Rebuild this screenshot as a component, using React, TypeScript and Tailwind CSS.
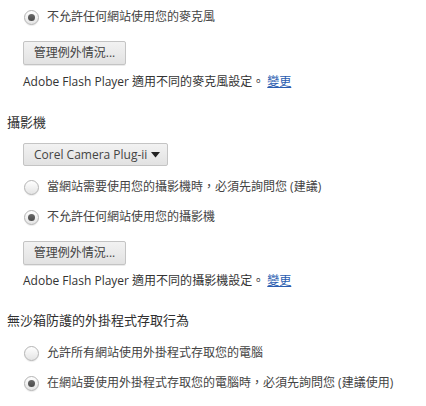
import React from 'react';

const font = { fontFamily: '"Open Sans", "Noto Sans CJK TC", sans-serif' };

const Radio: React.FC<{ checked?: boolean; label: string }> = ({ checked, label }) => (
  <label className="flex items-center h-[30px] pl-[24px] gap-[8px] text-[12px] text-[#444]">
    <span className="w-[15px] h-[15px] rounded-full border border-[#b4b4b4] bg-gradient-to-b from-[#ffffff] to-[#e4e4e4] shadow-[0_1px_1px_rgba(0,0,0,0.08)] flex items-center justify-center shrink-0">
      {checked && <span className="w-[7px] h-[7px] rounded-full bg-gradient-to-b from-[#6a6a6a] to-[#4a4a4a]" />}
    </span>
    <span className="whitespace-nowrap">{label}</span>
  </label>
);

const Button: React.FC<{ label: string }> = ({ label }) => (
  <div className="ml-[23px] w-[103px] h-[24px] flex items-center justify-center rounded-[2px] border border-[#c4c4c4] bg-gradient-to-b from-[#f2f2f2] to-[#e2e2e2] shadow-[0_1px_0_rgba(0,0,0,0.08)] text-[12px] text-[#444] whitespace-nowrap">
    {label}
  </div>
);

const Note: React.FC<{ what: string }> = ({ what }) => (
  <p className="ml-[23px] h-[18px] leading-[18px] text-[12px] text-[#333] whitespace-nowrap">
    Adobe Flash Player 適用不同的{what}設定。{' '}
    <a className="text-[#2a5db0] underline">變更</a>
  </p>
);

const Heading: React.FC<{ text: string }> = ({ text }) => (
  <h2 className="ml-[7px] h-[18px] leading-[18px] text-[13px] text-[#303030] whitespace-nowrap">{text}</h2>
);

export default function App() {
  return (
    <div className="w-[426px] h-[406px] bg-white overflow-hidden flex flex-col pt-[2px]" style={font}>
      <Radio checked label="不允許任何網站使用您的麥克風" />
      <div className="mt-[9px]"><Button label="管理例外情況..." /></div>
      <div className="mt-[8px]"><Note what="麥克風" /></div>
      <div className="mt-[22px]"><Heading text="攝影機" /></div>
      <div className="mt-[12px] ml-[23px] w-[145px] h-[23px] flex items-center rounded-[2px] border border-[#c4c4c4] bg-gradient-to-b from-[#f2f2f2] to-[#e2e2e2] text-[12px] text-[#444]">
        <span className="pl-[10px] w-[122px] whitespace-nowrap">Corel Camera Plug-ii</span>
        <svg width="9" height="6" viewBox="0 0 9 6" className="ml-[5px]">
          <path d="M0 0h9L4.5 5.5z" fill="#222" />
        </svg>
      </div>
      <div className="mt-[6px]">
        <Radio label="當網站需要使用您的攝影機時，必須先詢問您 (建議)" />
        <Radio checked label="不允許任何網站使用您的攝影機" />
      </div>
      <div className="mt-[9px]"><Button label="管理例外情況..." /></div>
      <div className="mt-[7px]"><Note what="攝影機" /></div>
      <div className="mt-[21px]"><Heading text="無沙箱防護的外掛程式存取行為" /></div>
      <div className="mt-[9px]">
        <Radio label="允許所有網站使用外掛程式存取您的電腦" />
        <Radio checked label="在網站要使用外掛程式存取您的電腦時，必須先詢問您 (建議使用)" />
      </div>
    </div>
  );
}
